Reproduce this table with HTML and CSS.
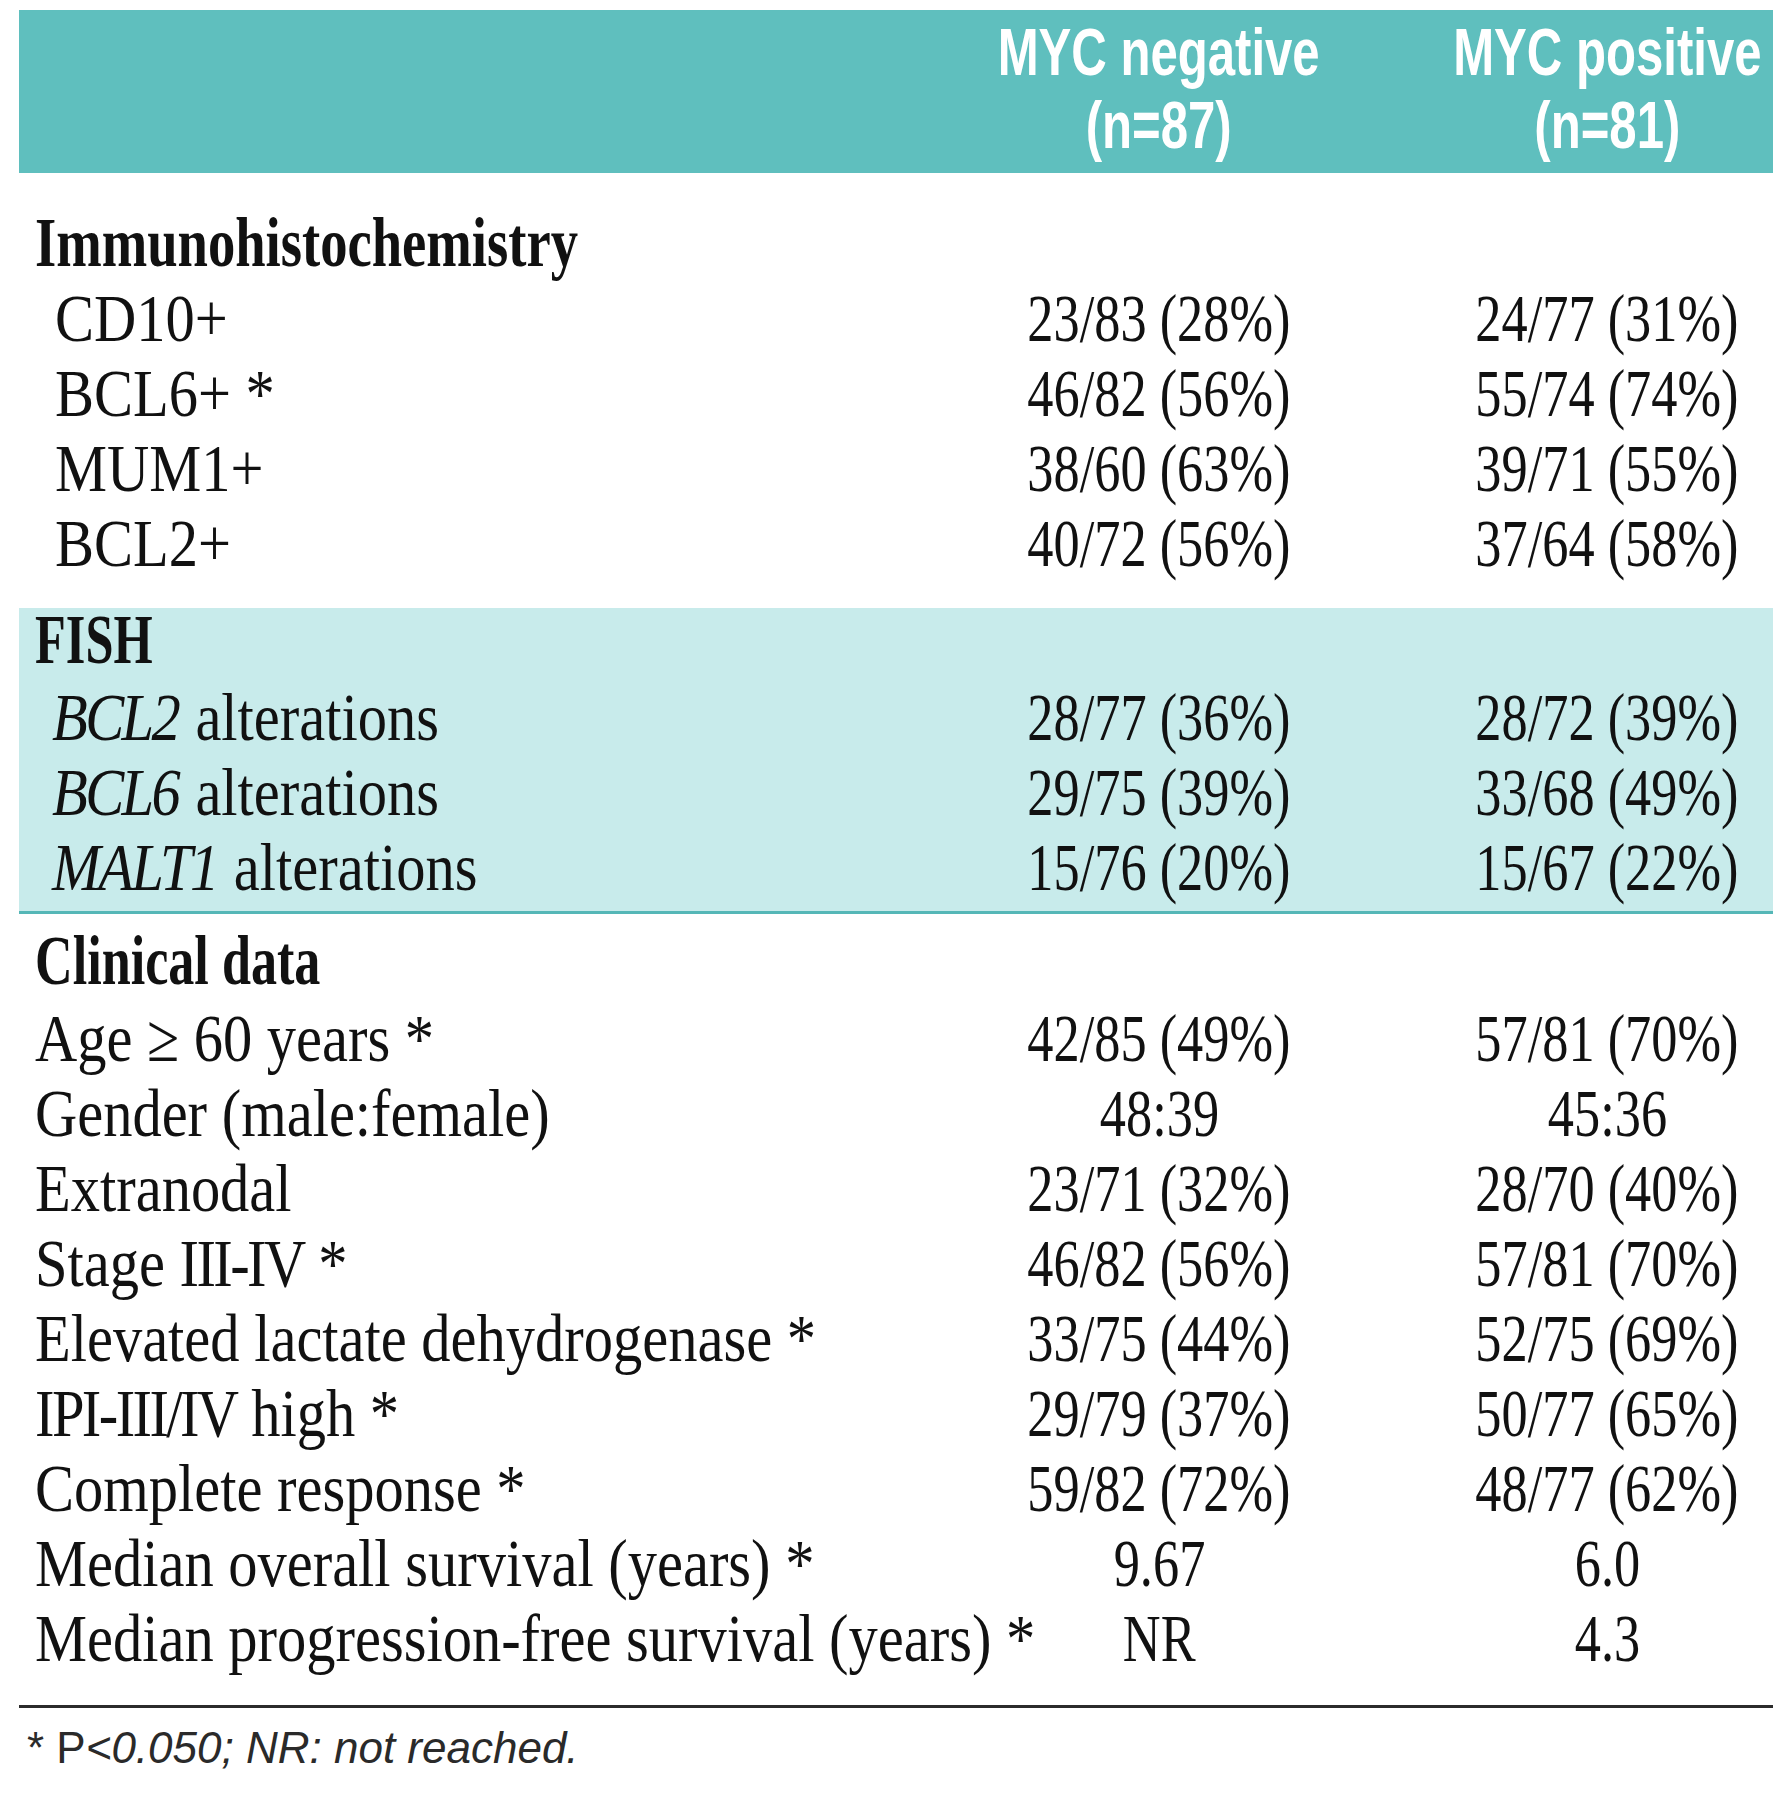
FILE: index.html
```html
<!DOCTYPE html>
<html lang="en">
<head>
<meta charset="utf-8">
<title>MYC negative vs MYC positive</title>
<link rel="stylesheet" href="styles.css">
</head>
<body>
<div class="table">
  <div class="row head">
    <div class="cell"></div>
    <div class="cell hc"><span class="hs">MYC negative<br>(n=87)</span></div>
    <div class="cell hc"><span class="hs">MYC positive<br>(n=81)</span></div>
  </div>

  <section class="sec ihc">
    <div class="sec-title"><span class="st">Immunohistochemistry</span></div>
    <div class="rows">
      <div class="row data"><div class="lbl sub"><span class="lt">CD10+</span></div><div class="val"><span class="vt">23/83 (28%)</span></div><div class="val"><span class="vt">24/77 (31%)</span></div></div>
      <div class="row data"><div class="lbl sub"><span class="lt">BCL6+ *</span></div><div class="val"><span class="vt">46/82 (56%)</span></div><div class="val"><span class="vt">55/74 (74%)</span></div></div>
      <div class="row data"><div class="lbl sub"><span class="lt">MUM1+</span></div><div class="val"><span class="vt">38/60 (63%)</span></div><div class="val"><span class="vt">39/71 (55%)</span></div></div>
      <div class="row data"><div class="lbl sub"><span class="lt">BCL2+</span></div><div class="val"><span class="vt">40/72 (56%)</span></div><div class="val"><span class="vt">37/64 (58%)</span></div></div>
    </div>
  </section>

  <section class="sec fish">
    <div class="sec-title"><span class="st st-short">FISH</span></div>
    <div class="rows">
      <div class="row data"><div class="lbl sub2"><span class="lt"><i>BCL2</i> alterations</span></div><div class="val"><span class="vt">28/77 (36%)</span></div><div class="val"><span class="vt">28/72 (39%)</span></div></div>
      <div class="row data"><div class="lbl sub2"><span class="lt"><i>BCL6</i> alterations</span></div><div class="val"><span class="vt">29/75 (39%)</span></div><div class="val"><span class="vt">33/68 (49%)</span></div></div>
      <div class="row data"><div class="lbl sub2"><span class="lt"><i>MALT1</i> alterations</span></div><div class="val"><span class="vt">15/76 (20%)</span></div><div class="val"><span class="vt">15/67 (22%)</span></div></div>
    </div>
  </section>

  <section class="sec clin">
    <div class="sec-title"><span class="st st-clin">Clinical data</span></div>
    <div class="rows">
      <div class="row data"><div class="lbl"><span class="lt">Age ≥ 60 years *</span></div><div class="val"><span class="vt">42/85 (49%)</span></div><div class="val"><span class="vt">57/81 (70%)</span></div></div>
      <div class="row data"><div class="lbl"><span class="lt">Gender (male:female)</span></div><div class="val"><span class="vt">48:39</span></div><div class="val"><span class="vt">45:36</span></div></div>
      <div class="row data"><div class="lbl"><span class="lt">Extranodal</span></div><div class="val"><span class="vt">23/71 (32%)</span></div><div class="val"><span class="vt">28/70 (40%)</span></div></div>
      <div class="row data"><div class="lbl"><span class="lt">Stage <span class="tight">III-IV</span> *</span></div><div class="val"><span class="vt">46/82 (56%)</span></div><div class="val"><span class="vt">57/81 (70%)</span></div></div>
      <div class="row data"><div class="lbl"><span class="lt">Elevated lactate dehydrogenase *</span></div><div class="val"><span class="vt">33/75 (44%)</span></div><div class="val"><span class="vt">52/75 (69%)</span></div></div>
      <div class="row data"><div class="lbl"><span class="lt"><span class="tight">IPI-III/IV</span> high *</span></div><div class="val"><span class="vt">29/79 (37%)</span></div><div class="val"><span class="vt">50/77 (65%)</span></div></div>
      <div class="row data"><div class="lbl"><span class="lt">Complete response *</span></div><div class="val"><span class="vt">59/82 (72%)</span></div><div class="val"><span class="vt">48/77 (62%)</span></div></div>
      <div class="row data"><div class="lbl"><span class="lt">Median overall survival (years) *</span></div><div class="val"><span class="vt">9.67</span></div><div class="val"><span class="vt">6.0</span></div></div>
      <div class="row data"><div class="lbl"><span class="lt">Median progression-free survival (years) *</span></div><div class="val"><span class="vt">NR</span></div><div class="val"><span class="vt">4.3</span></div></div>
    </div>
  </section>

  <div class="rule"></div>
  <p class="note">* P<i>&lt;0.050; NR: not reached.</i></p>
</div>
</body>
</html>
```

FILE: styles.css
```css
html, body {
  margin: 0;
  padding: 0;
  background: #ffffff;
}

body {
  font-family: "Liberation Serif", "Times New Roman", serif;
  color: #111111;
}

.table {
  width: 1754px;
  margin: 10px 0 0 19px;
  overflow: hidden;
}

.row {
  display: grid;
  grid-template-columns: 858px 564px 332px;
}

/* header band */
.head {
  background: #5fbfbe;
  color: #ffffff;
  font-family: "Liberation Sans", Arial, sans-serif;
  font-weight: 700;
  font-size: 67px;
  line-height: 73px;
  padding: 5px 0 12px;
}

.hc {
  display: flex;
  justify-content: center;
}

.hs {
  display: inline-block;
  text-align: center;
  white-space: nowrap;
  transform: scaleX(0.733);
}

/* sections */
.sec-title {
  font-weight: 700;
  font-size: 70px;
  padding-left: 16px;
  white-space: nowrap;
}

.st {
  display: inline-block;
  transform: scaleX(0.78);
  transform-origin: 0 50%;
}

.st-short {
  transform: scaleX(0.72);
}

.st-clin {
  transform: scaleX(0.745);
}

.ihc {
  margin-top: 32px;
}

.ihc .sec-title {
  line-height: 76px;
}

.fish {
  margin-top: 27px;
  background: #c8ebeb;
  padding-bottom: 6px;
  border-bottom: 3px solid #55b7b7;
}

.fish .sec-title {
  line-height: 63px;
}

.fish .rows {
  margin-top: 9px;
}

.clin {
  margin-top: 7px;
}

.clin .sec-title {
  line-height: 80px;
}

/* data rows */
.data {
  font-size: 68px;
  line-height: 75px;
}

.lbl {
  padding-left: 16px;
  white-space: nowrap;
}

.lbl.sub {
  padding-left: 36px;
}

.lbl.sub2 {
  padding-left: 33px;
}

.lt {
  display: inline-block;
  transform: scaleX(0.86);
  transform-origin: 0 50%;
}

.lt i {
  letter-spacing: -3px;
  margin-right: 3px;
}

.tight {
  letter-spacing: -3px;
}

.val {
  display: flex;
  justify-content: center;
}

.vt {
  display: inline-block;
  white-space: nowrap;
  transform: scaleX(0.77);
}

/* footer */
.rule {
  margin-top: 29px;
  height: 3px;
  background: #2b2b2b;
}

.note {
  margin: 15px 0 0;
  padding-left: 8px;
  font-family: "Liberation Sans", Arial, sans-serif;
  font-size: 44px;
  line-height: 50px;
  color: #2a2a2a;
}

.note i {
  font-style: italic;
}
```
